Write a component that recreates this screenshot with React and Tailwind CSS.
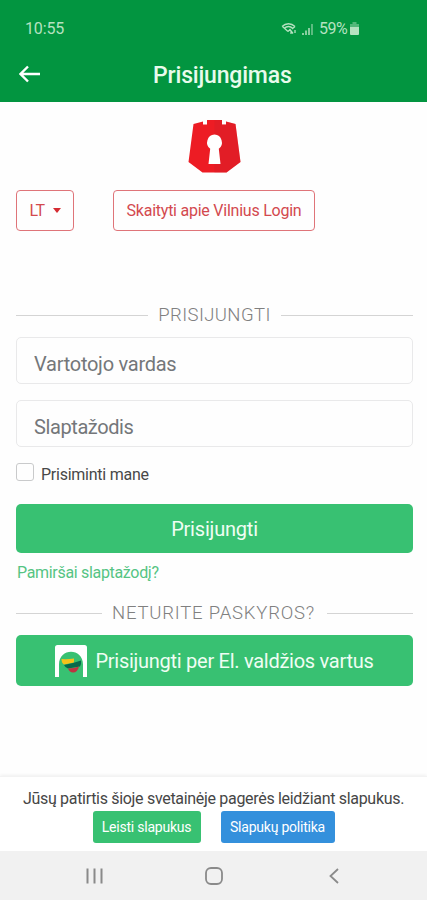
import React, { useState } from 'react';

const StatusBar = () => (
  <div className="h-12 pt-[9px] flex items-center text-[#b5e2c0]">
    <span className="w-[281px] pl-[25px] text-base tracking-[-0.15px]">10:55</span>
    <svg className="w-4 h-3.5 shrink-0" viewBox="0 0 16 14" fill="none" stroke="currentColor" strokeWidth="1.3">
      <path d="M1 4.500C4.800 .8 10.200 .8 14 4.500" />
      <path d="M1.500 4.500L7 9.500M14 4.500L11 7M3 6.500C6 3.800 9 3.800 12 6.500" />
      <path d="M7 9.500l2-2 3 4M10 9v3M14 8v3" />
    </svg>
    <svg className="ml-[5px] w-[11px] h-3 shrink-0" viewBox="0 0 11 12" fill="currentColor">
      <path d="M0 10h2v2H0zM3 7.500h2V12H3zM6 5h2v7H6z" opacity=".75" />
      <path d="M9 1h2v11H9z" opacity=".5" />
    </svg>
    <span className="ml-[6px] text-base tracking-[-0.5px]">59%</span>
    <svg className="ml-[3px] w-[9px] h-[13px] shrink-0" viewBox="0 0 9 13" fill="currentColor">
      <path d="M2.500 0h4v2H9v3H0V2h2.500z" opacity=".45" />
      <path d="M0 5h9v7q0 1-1 1H1q-1 0-1-1z" />
    </svg>
  </div>
);

const CastleLogo = () => (
  <svg className="w-[53px] h-[55px]" viewBox="0 0 53 55">
    <path fill="#ed1c24" d="M5.500 5L15 2.500V5.500h4V1h15v4.500h4V2.500L47.500 5L52.500 43L38.500 53.500h-24L.5 43z" />
    <path fill="#c9202a" opacity=".3" d="M26.500 1H34v4.500h4V2.500L47.500 5L52.500 43L38.500 53.500h-12z" />
    <path fill="#fff" d="M26.500 15.500a8 8 0 0 1 4.300 14.300L32.500 45H20.500l1.700-15.200a8 8 0 0 1 4.300-14.300z" />
  </svg>
);

const GateIcon = () => (
  <svg className="w-8 h-8 shrink-0" viewBox="0 0 32 32">
    <path fill="#fff" d="M0 32V2.500Q0 0 2.500 0h27Q32 0 32 2.500V32h-4V19.500C28 2.500 4 2.500 4 19.500V32z" />
    <path fill="#f5c21b" d="M6.500 14Q12 14.500 19 13.500V17.500L9 19.500Q6.500 18 6.500 14z" />
    <path fill="#07694a" d="M9 20L18 18L26 15.500Q26.500 19 25 21.500L13 23.500Q10 22.500 9 20z" />
    <path fill="#bd3341" d="M13 23.500q6 0 11-2-1.500 6-6 6-3.500 0-5-4z" />
  </svg>
);

const Separator = ({ children, className }) => (
  <div className={`h-6 flex items-center text-[#808080] ${className}`}>
    <span className="flex-1 h-px bg-[#d4d4d4]" />
    <span className="text-center text-[18.5px] leading-6 font-light whitespace-nowrap">{children}</span>
    <span className="flex-1 h-px bg-[#d4d4d4]" />
  </div>
);

const App = () => {
  const [remember, setRemember] = useState(false);

  return (
    <div className="w-[427px] h-[900px] flex flex-col overflow-hidden bg-[#fefefe] font-['Roboto',sans-serif]">
      {/* Header */}
      <header className="h-[102px] shrink-0 bg-[#029540]">
        <StatusBar />
        <div className="h-[54px] flex items-center">
          <svg className="ml-[19px] w-[22px] h-[18px] -mt-0.5 text-white" viewBox="0 0 22 18" fill="none" stroke="currentColor" strokeWidth="2.4">
            <path d="M21 9H2M9 1.500L1.500 9L9 16.500" />
          </svg>
          <h1 className="ml-[112px] mt-0.5 text-[23px] font-medium tracking-[-0.18px] text-[#e8fbec]">Prisijungimas</h1>
        </div>
      </header>

      {/* Login form */}
      <main className="flex-1 flex flex-col pl-4 pr-[14px] pt-[17px]">
        <div className="flex justify-center">
          <CastleLogo />
        </div>
        <div className="mt-4 flex gap-[39px] text-base text-[#d3494e]">
          <button className="w-[58px] h-[41px] flex items-center justify-center gap-2 border border-[#df7479] rounded">
            <span className="text-base tracking-[-0.5px]">LT</span>
            <span className="border-x-[4.5px] border-x-transparent border-t-[5px] border-t-[#d52b32]" />
          </button>
          <button className="w-[202px] h-[41px] border border-[#df7479] rounded whitespace-nowrap tracking-[-0.24px]">
            Skaityti apie Vilnius Login
          </button>
        </div>

        <Separator className="mt-[72px]">
          <span className="inline-block w-[133px] tracking-[0.4px]">PRISIJUNGTI</span>
        </Separator>
        <input
          type="text"
          placeholder="Vartotojo vardas"
          className="mt-[10px] h-[47px] shrink-0 px-[17px] pt-[7px] border border-[#e9e9ea] rounded-[5px] text-[20px] tracking-[-0.26px] placeholder:text-[#74777a]"
        />
        <input
          type="password"
          placeholder="Slaptažodis"
          className="mt-4 h-[47px] shrink-0 px-[17px] pt-[6px] border border-[#e9e9ea] rounded-[5px] text-[20px] tracking-[-0.4px] placeholder:text-[#74777a]"
        />
        <label className="mt-4 h-[18px] flex items-center text-base text-[#484848]">
          <input
            type="checkbox"
            checked={remember}
            onChange={(e) => setRemember(e.target.checked)}
            className="appearance-none w-[18px] h-[18px] border border-[#c9cacb] rounded-[3px] checked:bg-[#38c172]"
          />
          <span className="ml-[7px] mt-1.5 tracking-[-0.25px]">Prisiminti mane</span>
        </label>
        <button className="mt-[23px] h-[49px] shrink-0 rounded-[5px] bg-[#38c172] text-[20px] tracking-[-0.2px] text-[#effdf3]">Prisijungti</button>
        <a href="#" className="mt-2 h-6 leading-6 pl-px text-base tracking-[-0.32px] text-[#55c483]">Pamiršai slaptažodį?</a>
        <Separator className="mt-4">
          <span className="inline-block w-[225px] pr-0.5 tracking-[0.8px]">NETURITE PASKYROS?</span>
        </Separator>
        <button className="mt-[10px] h-[51px] shrink-0 flex items-center justify-center gap-2 rounded-[5px] bg-[#38c172] text-[20px] tracking-[-0.27px] text-[#effdf3] whitespace-nowrap">
          <GateIcon />
          <span>Prisijungti per El. valdžios vartus</span>
        </button>
      </main>

      {/* Cookie notice */}
      <section className="h-[75px] shrink-0 pt-[11px] bg-white border-t border-[#f3f3f3] shadow-[0_-1px_3px_rgba(0,0,0,0.06)]">
        <p className="h-[23px] leading-[22px] text-center text-base tracking-[-0.31px] whitespace-nowrap text-[#464646]">
          Jūsų patirtis šioje svetainėje pagerės leidžiant slapukus.
        </p>
        <div className="flex justify-center gap-5 text-sm tracking-[-0.22px] text-white">
          <button className="w-[108px] h-8 rounded-[3px] bg-[#38c172]">Leisti slapukus</button>
          <button className="w-[114px] h-8 rounded-[3px] bg-[#3490dc]">Slapukų politika</button>
        </div>
      </section>

      {/* System navigation */}
      <nav className="h-[49px] shrink-0 flex items-center bg-[#f1f1f1] text-[#8a8a8a]">
        <svg className="ml-[86px] w-[17px] h-4" viewBox="0 0 17 16" fill="none" stroke="currentColor" strokeWidth="2">
          <path d="M1.500 0.500V15.500M8.500 .5V15.500M15.500 .5V15.500" />
        </svg>
        <svg className="ml-[102px] w-[18px] h-[18px]" viewBox="0 0 18 18" fill="none" stroke="currentColor" strokeWidth="1.8">
          <rect x="1" y="1" width="16" height="16" rx="5" />
        </svg>
        <svg className="ml-[106px] w-[10px] h-4" viewBox="0 0 10 16" fill="none" stroke="currentColor" strokeWidth="1.8">
          <path d="M9 1L1.500 8L9 15" />
        </svg>
      </nav>
    </div>
  );
};

export default App;
